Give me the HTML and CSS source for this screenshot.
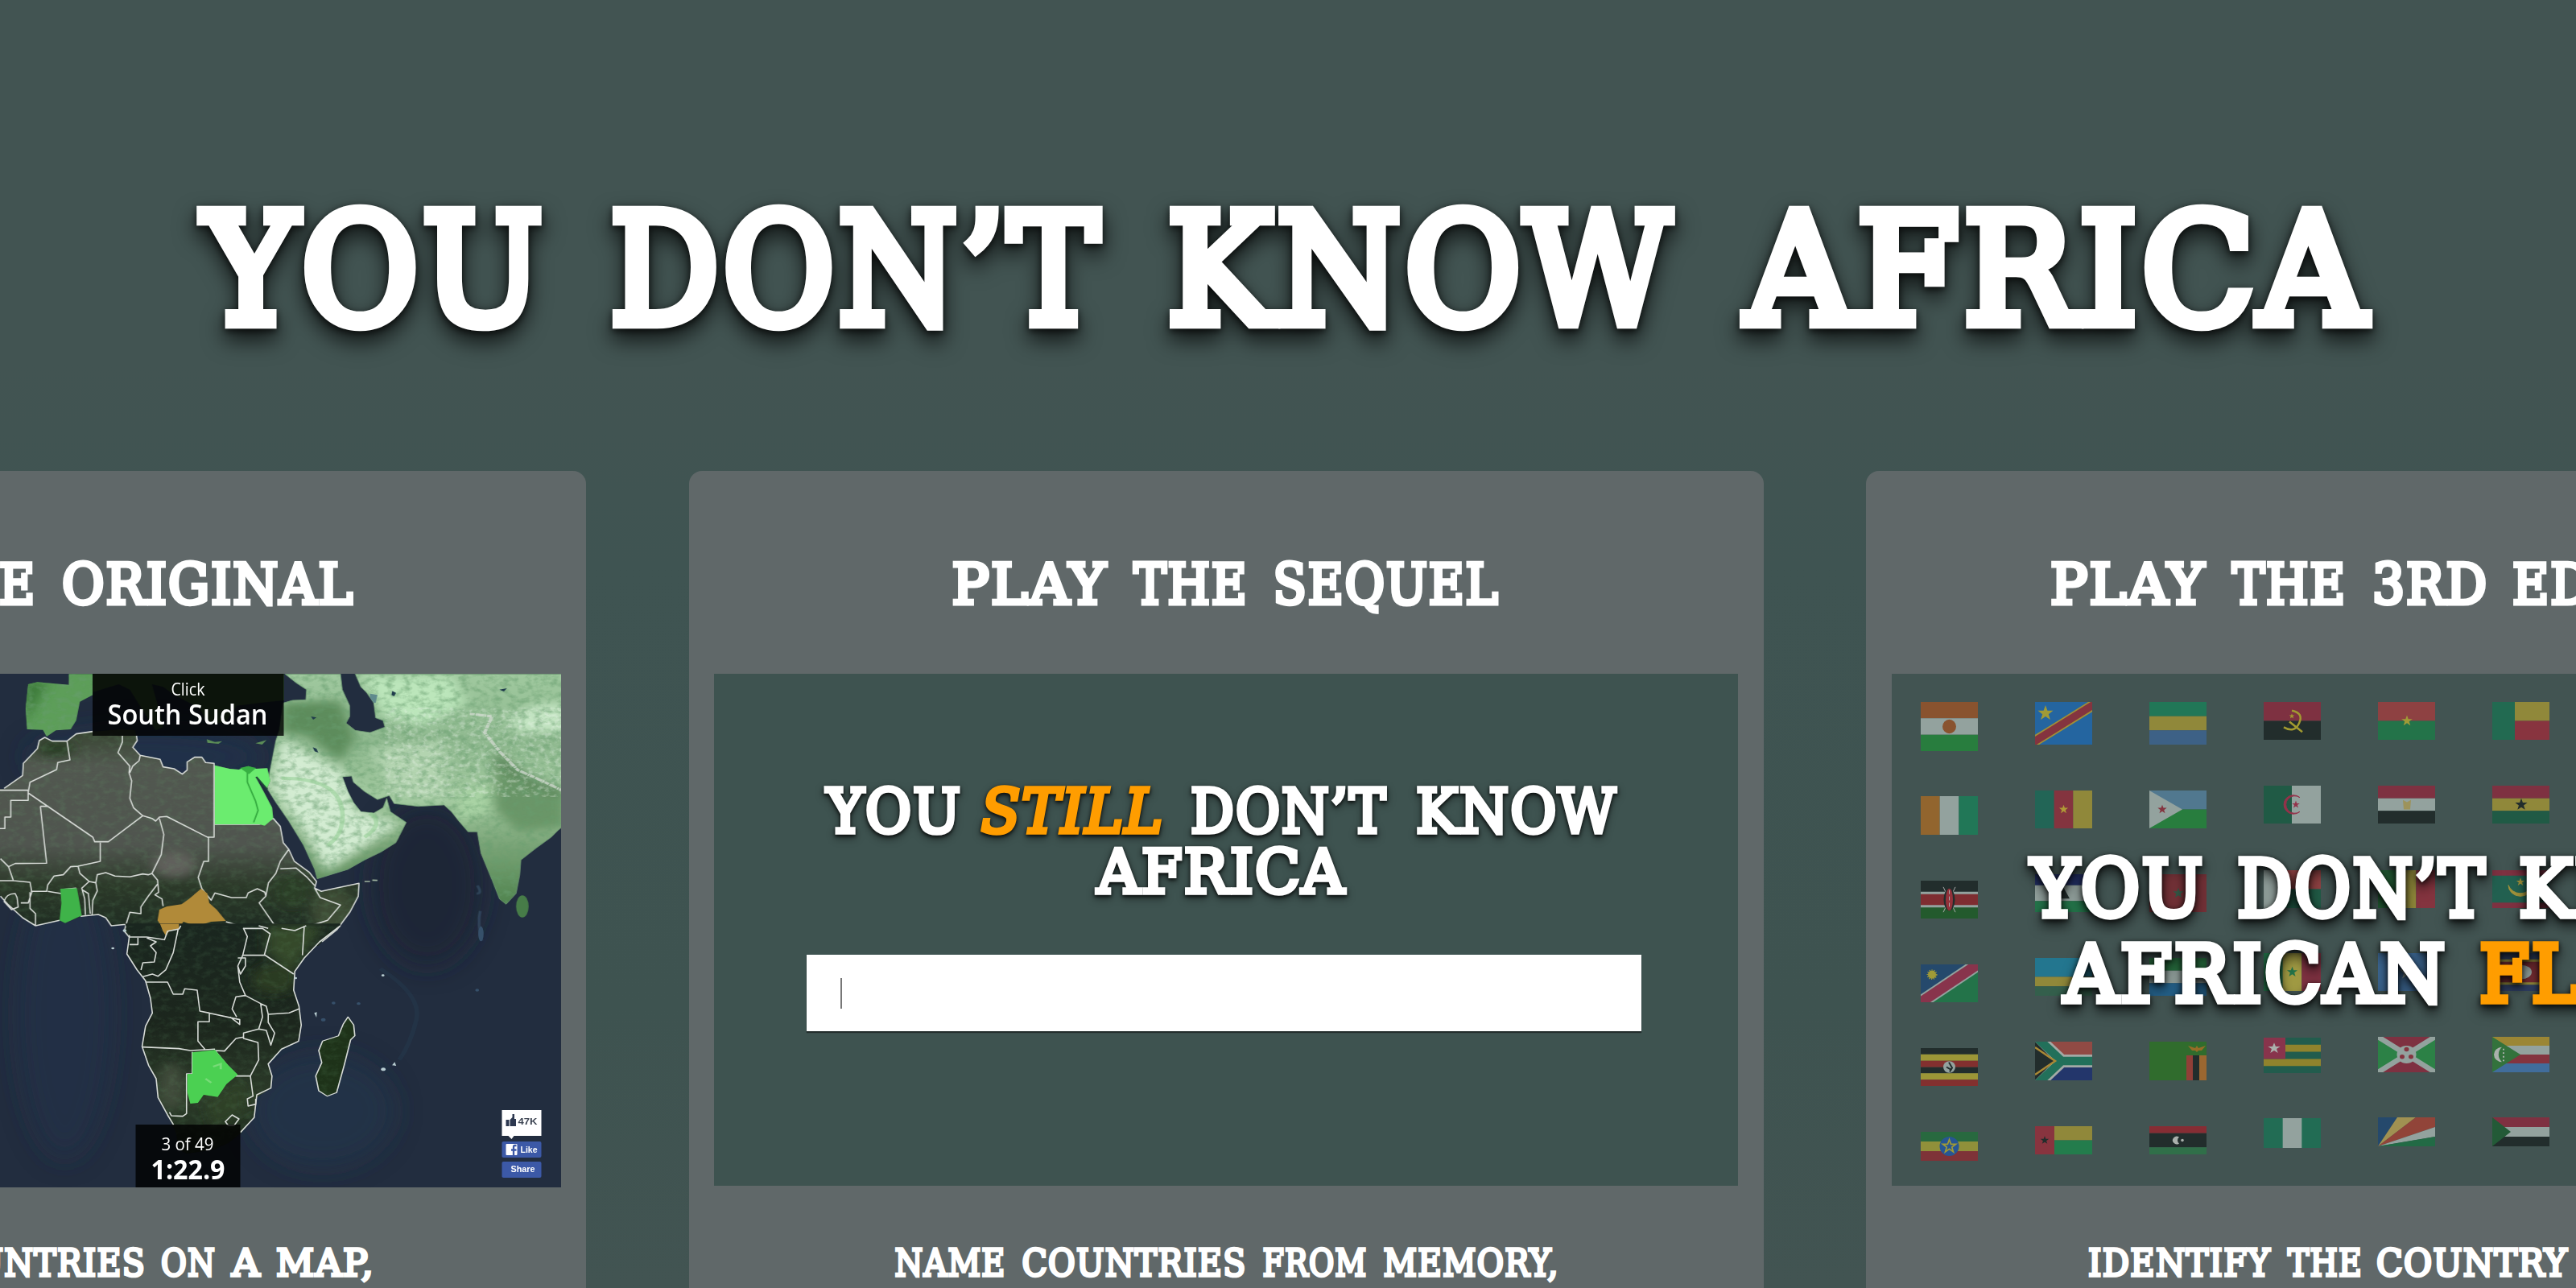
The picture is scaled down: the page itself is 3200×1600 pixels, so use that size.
FILE: index.html
```html
<!DOCTYPE html>
<html lang="en">
<head>
<meta charset="utf-8">
<title>You Don’t Know Africa</title>
<link rel="stylesheet" href="styles.css">
</head>
<body>
<header class="masthead">
  <h1 class="title">
    <svg class="lettering lettering-title" viewBox="0 200 3200 260">
      <text x="253" y="401" textLength="426" lengthAdjust="spacingAndGlyphs">YOU</text>
      <text x="758" y="401" textLength="612" lengthAdjust="spacingAndGlyphs">DON’T</text>
      <text x="1450" y="401" textLength="630" lengthAdjust="spacingAndGlyphs">KNOW</text>
      <text x="2169" y="401" textLength="775" lengthAdjust="spacingAndGlyphs">AFRICA</text>
    </svg>
  </h1>
</header>
<main class="games">
  <article class="card">
    <h2 class="card-title">
      <svg class="lettering lettering-heading" viewBox="-607 585 1335 252">
        <text x="-323" y="749.5" textLength="193" lengthAdjust="spacingAndGlyphs">PLAY</text>
        <text x="-98" y="749.5" textLength="143" lengthAdjust="spacingAndGlyphs">THE</text>
        <text x="77" y="749.5" textLength="363" lengthAdjust="spacingAndGlyphs">ORIGINAL</text>
      </svg>
    </h2>
    <div class="screen screen-map">
      <svg class="art" viewBox="-575.500 837 1272 638">
        <defs>
          <linearGradient id="sahara" x1="0" y1="250" x2="0" y2="1050" gradientUnits="userSpaceOnUse">
            <stop offset="0" stop-color="#35432f"/><stop offset=".18" stop-color="#525850"/><stop offset=".55" stop-color="#50554f"/><stop offset=".74" stop-color="#2c3929"/><stop offset="1" stop-color="#1b2820"/>
          </linearGradient>
          <linearGradient id="south" x1="0" y1="0" x2="0" y2="850" gradientUnits="userSpaceOnUse">
            <stop offset="0" stop-color="#1a261f"/><stop offset=".45" stop-color="#1c261d"/><stop offset=".75" stop-color="#2c3b29"/><stop offset="1" stop-color="#1c2a1c"/>
          </linearGradient>
          <linearGradient id="asia" x1="0" y1="50" x2="0" y2="900" gradientUnits="userSpaceOnUse">
            <stop offset="0" stop-color="#a0c99f"/><stop offset=".3" stop-color="#8fb98f"/><stop offset=".55" stop-color="#a3caa0"/><stop offset=".75" stop-color="#7ba578"/><stop offset="1" stop-color="#528550"/>
          </linearGradient>
          <filter id="soft" x="-30%" y="-30%" width="160%" height="160%"><feGaussianBlur stdDeviation="16"/></filter>
          <filter id="relief" x="0" y="0" width="100%" height="100%">
            <feTurbulence type="fractalNoise" baseFrequency=".045 .05" numOctaves="5" seed="8"/>
            <feColorMatrix values="0 0 0 0 .14  0 0 0 0 .34  0 0 0 0 .16  2.6 0 0 0 -1.1"/>
          </filter>
          <filter id="snow" x="0" y="0" width="100%" height="100%">
            <feTurbulence type="fractalNoise" baseFrequency=".07 .07" numOctaves="4" seed="3"/>
            <feColorMatrix values="0 0 0 0 .9  0 0 0 0 .96  0 0 0 0 .9  3 0 0 0 -1.4"/>
          </filter>
          <path id="eurasia" d="M765 160L790 150 826 148 828 110 800 85 770 52H920L925 110 945 170V210L935 235 960 262 1000 270 1040 250 1035 225 1015 215 1010 160 990 120 975 100 960 52H1530V610L1508 635 1490 660 1450 700 1408 745 1405 800 1395 870 1368 910 1350 890 1330 820 1300 720 1290 640 1265 640 1240 600 1220 565 1200 540 1130 545 1065 535 1052 505 1020 520 985 490 955 455 950 432 925 435 940 490 955 530 975 565 1010 570 1035 550 1045 515 1055 565 1098 605 1070 680 1030 715 985 745 940 780 857 815 850 780 820 690 780 600 745 530 722 480 728 420 735 370 745 300 755 260Z"/>
          <path id="iberia" d="M75 90L100 82 185 92V52H250V130L215 155 205 225 190 258 150 262 125 285 115 260 72 258 68 180Z"/>
          <path id="north" d="M-30 480H10L60 430 62 385 100 330 105 300 120 288 140 302H180L205 275 250 266 330 258 365 262 370 300 358 325 378 355 432 370 440 398 470 405 492 425 505 410V380L525 362H545L555 382 578 385 580 392 620 405 645 408 670 395 690 405 722 403 730 450 720 480 700 450 690 435 712 490 735 550 738 590 757 620 765 680 780 705 795 750 835 790 855 825 850 850 868 862 900 852 970 832 968 880 945 940 910 1005 870 1050 860 1065H350V1035L335 1010 340 985 300 990 285 960 265 948 225 950 175 980 160 970 95 990 60 960 20 910 0 880-30 850Z"/>
          <path id="cone" d="M328-8L340 35 333 105 360 165 382 205 395 270 400 325 382 375 373 450 390 520 410 570 415 640 440 705 462 770 470 835 490 850 560 835 600 810 635 770 668 715 675 640 712 605 715 560 705 515 740 460 785 430 792 370 786 300 772 240 775 170 800 120 840 60 895 0V-8Z"/>
          <path id="madagascar" d="M915 340L903 365 897 385 890 410 848 430 838 465 846 510 830 560 838 615 860 635 885 622 905 520 922 425 933 410 930 370Z"/>
          <clipPath id="asiaClip"><use href="#eurasia"/><use href="#iberia"/></clipPath>
          <clipPath id="northClip"><use href="#north"/></clipPath>
          <clipPath id="coneClip"><use href="#cone"/><use href="#madagascar"/></clipPath>
        </defs>
        <rect x="-576" y="837" width="1273" height="638" fill="#222d3f"/>
        <g filter="url(#soft)"><ellipse cx="180" cy="940" rx="150" ry="35" fill="#22334f" opacity=".6"/><ellipse cx="80" cy="1260" rx="60" ry="180" fill="#20334b" opacity=".5"/><ellipse cx="400" cy="1380" rx="90" ry="70" fill="#23374d" opacity=".5"/><ellipse cx="530" cy="1100" rx="70" ry="100" fill="#1d2435" opacity=".7"/></g>
        <g transform="translate(0 820) scale(.4592 .3333)">
          <path d="M250 52H767V150L700 160 640 170 610 230 560 240 540 180 470 130 440 100 410 90 430 190 440 250 420 262 400 220 350 110 320 90 250 120Z" fill="#3c6338"/>
          <use href="#eurasia" fill="url(#asia)" stroke="#6f9a74" stroke-width="2"/>
          <use href="#iberia" fill="#5d9e59"/>
          <g clip-path="url(#asiaClip)">
            <g filter="url(#soft)">
              <path d="M760 290L930 420 960 560 1080 610 880 790 820 640 735 470Z" fill="#d3ecd2"/>
              <path d="M980 60L1220 60 1260 160 1150 240 1040 210Z" fill="#bce6bb"/>
              <path d="M1370 220L1450 165 1530 160V270H1400Z" fill="#c4e5c3"/>
              <path d="M1240 490L1330 460 1350 550 1240 600Z" fill="#a9d3a4"/>
              <path d="M1000 330L1200 300 1200 520 1060 500Z" fill="#b3d4b0"/>
              <path d="M760 160L920 150 960 290 920 380 830 280 760 270Z" fill="#5d8c5b"/>
              <path d="M1340 320L1420 440 1530 510V620L1400 640 1330 550Z" fill="#6b9667"/>
              <path d="M1340 370L1440 450 1530 500" fill="none" stroke="#4a734b" stroke-width="18"/>
              <path d="M60 80L130 80 90 180 70 240Z" fill="#3c7a3b"/>
            </g>
            <rect y="40" width="1530" height="900" filter="url(#relief)" opacity=".55"/>
            <rect x="1040" y="180" width="490" height="330" filter="url(#snow)" opacity=".35"/>
            <path d="M760 440Q850 440 890 480T925 600Q920 660 885 690M985 660Q1040 610 1000 570" fill="none" stroke="#8ecb8e" stroke-width="12" opacity=".5"/>
            <path d="M1270 200L1330 210 1310 270 1350 340 1400 410 1450 440 1518 485" fill="none" stroke="#d7ddd5" stroke-width="9" stroke-dasharray="13 3 22 2 5 2" opacity=".7"/>
            <path d="M1000 200L1015 215 1030 245 1000 262Z" fill="#74b9b7"/>
            <path d="M1000 125L1020 130 1015 160 1000 155Z" fill="#5f8a8d"/>
            <path d="M1060 115L1070 122 1065 135 1058 130ZM1350 110L1370 105 1362 117ZM845 325L855 330 860 345 850 340ZM840 210L855 214 846 222Z" fill="#1f3b4c"/>
          </g>
          <path d="M558 295L580 305 600 302 590 312 560 308ZM690 310L720 298 708 315Z" fill="#5c8d57"/>
          <ellipse cx="1412" cy="918" rx="17" ry="41" fill="#477c48"/>
          <path d="M1290 840Q1305 870 1288 870M1298 935Q1290 980 1302 1045" fill="none" stroke="#42617c" stroke-width="8" opacity=".45"/>
          <path d="M985 825H1000M1006 820L1020 821" stroke="#9fb39f" stroke-width="5"/>
          <use href="#north" fill="url(#sahara)"/>
          <g clip-path="url(#northClip)">
            <g filter="url(#soft)"><ellipse cx="150" cy="330" rx="50" ry="30" fill="#2a3d26"/><ellipse cx="900" cy="940" rx="60" ry="90" fill="#3c4c34"/><ellipse cx="790" cy="860" rx="50" ry="60" fill="#2c3d26"/><ellipse cx="470" cy="760" rx="60" ry="50" fill="#60615c"/></g>
            <rect y="240" width="1000" height="820" filter="url(#relief)" opacity=".18"/>
          </g>
          <g stroke="#d6dad6" stroke-width="1.6" stroke-linejoin="round" fill="none">
            <path vector-effect="non-scaling-stroke" d="M-30 485H75V523H28V585H12V628H-5M10 478L60 430 62 385 100 330 105 300 120 288 140 302H180L205 275 250 266M180 302L188 372 155 382 152 408 80 455 75 495 250 660 255 677H292L385 580 360 550 350 515 355 450 348 420 350 395 318 345 330 305V282M368 282L370 300 358 325 378 355 375 375 358 395 350 420M378 355L432 370 440 398 470 405 492 425 505 410V380L525 362H545L555 382 578 385V660H563V750H550L535 810 545 852M385 580L410 590 420 600 430 585 450 583 563 662M430 590L442 650 435 725 410 795 400 800 385 797 350 808 310 805 285 792 262 800 258 830 262 860 250 895 248 948M108 545H130M108 545L125 757 40 758 22 770 0 740M22 770L35 822 80 828 85 865 75 905 55 905M270 680V750L210 768 190 770 170 800 145 805 128 838 125 862H82M210 768L215 795 240 825 220 850 228 890 230 950M240 825L258 830M205 850L165 855M243 945L238 870 220 855M128 862L165 870M410 795L425 820 428 865 418 875 437 890 440 917M425 835L400 880 380 920 380 945 350 940 340 985M545 852L570 895 580 868 625 885 665 885 670 868 695 852 715 865 718 880M718 880L725 830 745 795 757 750 780 705M757 778L800 775 830 810 850 840M718 880L700 905 715 935 740 985M850 850L865 885 920 913 885 970 835 992 780 1002 765 988 740 985 700 1000 670 1000 610 975M835 992L820 1015V1060M670 1000L665 1060M715 995L725 1060M580 612H700L738 590 757 620 765 680 780 705 795 750 835 790 855 825 850 850 868 862 900 852 970 832 968 880 945 940 910 1005 870 1050M95 990L60 960 20 910 0 880M95 990V945L80 925V865M40 870Q15 870 10 900L30 930 48 920 45 885ZM95 990L160 970M217 955L265 948 285 960 300 990 340 985 335 1010 350 1035V1060M350 1035H448M-10 822L35 822"/>
          </g>
          <path d="M580 392L620 405 645 408 670 395 690 405 722 403 730 450 720 480 700 450 690 435 712 490 735 550 738 590 715 617 700 612H580Z" fill="#6bec6f"/>
          <path d="M668 410V455L690 525 697 560 685 605" stroke="#33a93e" stroke-width="4" fill="none"/>
          <path d="M648 402L672 425 692 402 670 395Z" fill="#38b043"/>
          <path d="M692 435L722 482" stroke="#1d4436" stroke-width="5"/>
          <path d="M162 852L207 850 215 910 220 952 175 980 160 970 165 905Z" fill="#3fb349"/>
          <path d="M543 852L560 870 565 905 585 930 610 972 570 975 530 992 495 975 480 1005 455 1010 448 1020 425 970 430 930 450 918 490 910 510 890Z" fill="#b18a39"/>
        </g>
        <g transform="translate(0 1150) scale(.4719 .3333)">
          <use href="#cone" fill="url(#south)"/><use href="#madagascar" fill="#1e3219"/>
          <g clip-path="url(#coneClip)">
            <g filter="url(#soft)"><path d="M700 0H850L770 170 700 100Z" fill="#35482b"/><ellipse cx="450" cy="600" rx="35" ry="90" fill="#404b3b"/><path d="M540 660L640 570 650 680 560 760Z" fill="#2f4128"/><ellipse cx="720" cy="200" rx="60" ry="55" fill="#293a20"/></g>
            <rect x="320" width="620" height="850" filter="url(#relief)" opacity=".14"/>
            <path d="M420-8H470V12L445 18 436 38 428 20Z" fill="#b18a39"/>
          </g>
          <g stroke="#d6dad6" stroke-width="1.6" stroke-linejoin="round" fill="none">
            <path vector-effect="non-scaling-stroke" d="M340 35L333 105 360 165 382 205 395 270 400 325 382 375 373 450 390 520 410 570 415 640 440 705 456 742M632 770L668 715 675 630 712 605 715 560 705 515 740 460 785 430 792 370 786 300 772 240 775 170 800 120 840 60 895 0"/>
            <path vector-effect="non-scaling-stroke" d="M340 42H385L432 52 440 20 470 12 475 0M340 70H362V45M385 45L410 60 395 75 410 100 405 135 375 138 370 165M468 12L455 100 435 165 415 188 400 180 375 190M382 210H440L455 255H480L485 235 518 240 525 318 550 325V358H520V430L538 460M525 318L630 350V368L605 340M622 340L610 310 620 265 645 260 685 290 700 300 705 330 760 325 786 310M645 260L630 210 625 150 638 110 650 40 640 10 690 10 710 30 695 108 740 150 772 180M638 110H695M625 120H645V150L632 180 625 150M800 0L795 110M680 0L705 10M740 10L775 18 805 0M685 290L690 340 680 385 640 400V420L678 435 680 500 658 560H620L565 465 590 467 620 420 640 415M680 385L700 390 712 445 722 400 705 360 705 330M373 452L470 458 500 465 565 460M505 470V552H490V700L480 710 450 708 445 695M658 560L665 635 650 645 652 672 672 665V645M592 730L610 705 628 720 615 745 600 745Z"/>
            <use href="#madagascar" stroke-width="3.5"/>
          </g>
          <path d="M505 472L565 463 600 520 625 555 595 590 572 638 535 630 520 660 500 663 492 620V552H505Z" fill="#4bd052"/>
          <path d="M560 525L580 515V535M540 570L555 585" stroke="#8be089" stroke-width="6" fill="none" opacity=".7"/>
          <g fill="#b8cdd1"><circle cx="296" cy="84" r="4"/><circle cx="327" cy="18" r="5"/><circle cx="1007" cy="185" r="4"/><circle cx="1008" cy="535" r="6"/><path d="M1031 520L1038 508 1042 522ZM826 325L833 322 832 342Z"/><circle cx="777" cy="195" r="4"/></g>
          <g fill="#36506a"><ellipse cx="1265" cy="30" rx="7" ry="28"/><circle cx="1255" cy="240" r="5"/><circle cx="877" cy="288" r="5"/><circle cx="943" cy="290" r="5"/><circle cx="850" cy="350" r="6"/></g>
          <path d="M1000 160Q1110 260 1095 350T1050 500" fill="none" stroke="#2b4761" stroke-width="12" opacity=".22"/>
        </g>
        <g fill="#000" fill-opacity=".8"><rect x="114" y="837" width="238" height="77"/><rect x="168" y="1397" width="130" height="78"/></g>
        <g class="map-text">
          <text x="212" y="864" font-size="22" textLength="42" lengthAdjust="spacingAndGlyphs">Click</text>
          <text x="133" y="900" font-size="34" font-weight="600" textLength="199" lengthAdjust="spacingAndGlyphs">South Sudan</text>
          <text x="200" y="1429" font-size="22" textLength="65" lengthAdjust="spacingAndGlyphs">3 of 49</text>
          <text x="187" y="1465" font-size="34" font-weight="700" textLength="92" lengthAdjust="spacingAndGlyphs">1:22.9</text>
        </g>
        <path d="M623 1379H672V1411H638L635 1415 631 1411H623Z" fill="#fff"/>
        <path d="M628 1391H632V1399H628ZM633 1391L636 1388V1384H638.500V1390H640.500V1399H633Z" fill="#2d3850"/>
        <rect x="623" y="1418" width="49" height="20" rx="2" fill="#3c59a7"/><rect x="623" y="1443" width="49" height="20" rx="2" fill="#3c59a7"/>
        <rect x="628" y="1421" width="14" height="14" rx="1" fill="#fff"/><path d="M641 1423H639Q637.500 1423 637.500 1425V1435M634.500 1428.500H641" stroke="#3c59a7" stroke-width="2.300" fill="none"/>
        <g class="social-text">
          <text class="count" x="643" y="1397" textLength="24" lengthAdjust="spacingAndGlyphs">47K</text>
          <text x="646" y="1432" textLength="21" lengthAdjust="spacingAndGlyphs">Like</text>
          <text x="634" y="1456" textLength="30" lengthAdjust="spacingAndGlyphs">Share</text>
        </g>
      </svg>
    </div>
    <p class="card-caption">
      <svg class="lettering lettering-caption" viewBox="-607 1475 1335 125">
        <text x="-345" y="1585" textLength="227" lengthAdjust="spacingAndGlyphs">IDENTIFY</text>
        <text x="-98" y="1585" textLength="279" lengthAdjust="spacingAndGlyphs">COUNTRIES</text>
        <text x="200" y="1585" textLength="68" lengthAdjust="spacingAndGlyphs">ON</text>
        <text x="288" y="1585" textLength="36" lengthAdjust="spacingAndGlyphs">A</text>
        <text x="343" y="1585" textLength="122" lengthAdjust="spacingAndGlyphs">MAP,</text>
      </svg>
    </p>
  </article>

  <article class="card">
    <h2 class="card-title">
      <svg class="lettering lettering-heading" viewBox="855.500 585 1335 252">
        <text x="1182" y="749.5" textLength="193" lengthAdjust="spacingAndGlyphs">PLAY</text>
        <text x="1408" y="749.5" textLength="142" lengthAdjust="spacingAndGlyphs">THE</text>
        <text x="1581" y="749.5" textLength="281" lengthAdjust="spacingAndGlyphs">SEQUEL</text>
      </svg>
    </h2>
    <div class="screen screen-quiz">
      <h3 class="quiz-title">
        <svg class="lettering lettering-quiz" viewBox="888 950 1272 200">
          <text x="1028" y="1033.5" textLength="168" lengthAdjust="spacingAndGlyphs">YOU</text>
          <text class="accent slanted" x="1220" y="1033.5" textLength="227" lengthAdjust="spacingAndGlyphs">STILL</text>
          <text x="1480" y="1033.5" textLength="244" lengthAdjust="spacingAndGlyphs">DON’T</text>
          <text x="1760" y="1033.5" textLength="250" lengthAdjust="spacingAndGlyphs">KNOW</text>
          <text x="1364" y="1108.500" textLength="309" lengthAdjust="spacingAndGlyphs">AFRICA</text>
        </svg>
      </h3>
      <div class="answer"><span class="caret"></span></div>
    </div>
    <p class="card-caption">
      <svg class="lettering lettering-caption" viewBox="855.500 1473 1335 127">
        <text x="1111" y="1585" textLength="138" lengthAdjust="spacingAndGlyphs">NAME</text>
        <text x="1269" y="1585" textLength="279" lengthAdjust="spacingAndGlyphs">COUNTRIES</text>
        <text x="1568" y="1585" textLength="130" lengthAdjust="spacingAndGlyphs">FROM</text>
        <text x="1718" y="1585" textLength="218" lengthAdjust="spacingAndGlyphs">MEMORY,</text>
      </svg>
    </p>
  </article>

  <article class="card">
    <h2 class="card-title">
      <svg class="lettering lettering-heading" viewBox="2318 585 1335 252">
        <text x="2547" y="749.5" textLength="193" lengthAdjust="spacingAndGlyphs">PLAY</text>
        <text x="2773" y="749.5" textLength="142" lengthAdjust="spacingAndGlyphs">THE</text>
        <text x="2947" y="749.5" textLength="144" lengthAdjust="spacingAndGlyphs">3RD</text>
        <text x="3121" y="749.5" textLength="304" lengthAdjust="spacingAndGlyphs">EDITION</text>
      </svg>
    </h2>
    <div class="screen screen-flags">
      <svg class="art" viewBox="2350 837 1272 636">
        <defs>
          <path id="star" d="M0-10L2.400-3.200H9.500L3.800 1.200 5.900 8.100 0 4 -5.900 8.100 -3.800 1.200 -9.500-3.200H-2.400Z"/>
        </defs>
        <!-- Each flag is a 71-unit wide nested viewport stretched to its row height -->
        <g>
          <svg x="2386" y="872" width="71" height="61" viewBox="0 0 71 60" preserveAspectRatio="none"><path fill="#89532f" d="M0 0h71v20H0z"/><path fill="#93a29e" d="M0 20h71v20H0z"/><path fill="#287d3e" d="M0 40h71v20H0z"/><circle cx="35.500" cy="30" r="8.500" fill="#89532f"/></svg>
          <svg x="2528" y="872" width="71" height="53" viewBox="0 0 71 53" preserveAspectRatio="none"><path fill="#2465a0" d="M0 0h71v53H0z"/><path stroke="#a08f37" stroke-width="13" d="M-4 51L75 2"/><path stroke="#84343f" stroke-width="9.500" d="M-4 51L75 2"/><use href="#star" x="13" y="14" fill="#a09a37"/></svg>
          <svg x="2670" y="872" width="71" height="53" viewBox="0 0 71 60" preserveAspectRatio="none"><path fill="#217757" d="M0 0h71v20H0z"/><path fill="#90883a" d="M0 20h71v20H0z"/><path fill="#3d6186" d="M0 40h71v20H0z"/></svg>
          <svg x="2812" y="872" width="71" height="47" viewBox="0 0 71 48" preserveAspectRatio="none"><path fill="#7e3141" d="M0 0h71v24H0z"/><path fill="#222d2c" d="M0 24h71v24H0z"/><path d="M35 11Q50 14 44 27T25 32M32 25L48 38" fill="none" stroke="#a29a30" stroke-width="2.500"/><use href="#star" transform="translate(35 18) scale(.35)" fill="#a29a30"/></svg>
          <svg x="2954" y="872" width="71" height="47" viewBox="0 0 71 48" preserveAspectRatio="none"><path fill="#8e4142" d="M0 0h71v24H0z"/><path fill="#237349" d="M0 24h71v24H0z"/><use href="#star" transform="translate(36 24) scale(.72)" fill="#a09a37"/></svg>
          <svg x="3096" y="872" width="71" height="47" viewBox="0 0 71 48" preserveAspectRatio="none"><path fill="#226a51" d="M0 0h28v48H0z"/><path fill="#90883a" d="M28 0h43v24H28z"/><path fill="#88343f" d="M28 24h43v24H28z"/></svg>

          <svg x="2386" y="989" width="71" height="48" viewBox="0 0 72 48" preserveAspectRatio="none"><path fill="#92652e" d="M0 0h24v48H0z"/><path fill="#93a29e" d="M24 0h24v48H24z"/><path fill="#217757" d="M48 0h24v48H48z"/></svg>
          <svg x="2528" y="982" width="71" height="47" viewBox="0 0 72 48" preserveAspectRatio="none"><path fill="#226556" d="M0 0h24v48H0z"/><path fill="#84343f" d="M24 0h24v48H24z"/><path fill="#90883a" d="M48 0h24v48H48z"/><use href="#star" transform="translate(36 24) scale(.6)" fill="#b09a37"/></svg>
          <svg x="2670" y="982" width="71" height="47" viewBox="0 0 71 48" preserveAspectRatio="none"><path fill="#51788f" d="M0 0h71v24H0z"/><path fill="#287d3e" d="M0 24h71v24H0z"/><path fill="#93a29e" d="M0 0L41 24 0 48z"/><use href="#star" transform="translate(16 24) scale(.6)" fill="#84343f"/></svg>
          <svg x="2812" y="976" width="71" height="47" viewBox="0 0 71 48" preserveAspectRatio="none"><path fill="#205a45" d="M0 0h35v48H0z"/><path fill="#93a29e" d="M35 0h36v48H35z"/><path d="M45 15A11 11 0 1 0 45 33A12 12 0 1 1 45 15Z" fill="#93324a" stroke="#93324a"/><use href="#star" transform="translate(40 24) scale(.5)" fill="#93324a"/></svg>
          <svg x="2954" y="976" width="71" height="47" viewBox="0 0 71 48" preserveAspectRatio="none"><path fill="#7e3141" d="M0 0h71v16H0z"/><path fill="#93a29e" d="M0 16h71v16H0z"/><path fill="#222d2c" d="M0 32h71v16H0z"/><path d="M31 18L36 21 41 18 40 30H32Z" fill="#9d935b"/></svg>
          <svg x="3096" y="976" width="71" height="47" viewBox="0 0 71 48" preserveAspectRatio="none"><path fill="#7e3141" d="M0 0h71v16H0z"/><path fill="#90883a" d="M0 16h71v16H0z"/><path fill="#205a45" d="M0 32h71v16H0z"/><use href="#star" transform="translate(36 24) scale(.8)" fill="#222d2c"/></svg>

          <svg x="2386" y="1094" width="71" height="47" viewBox="0 0 71 48" preserveAspectRatio="none"><path fill="#93a29e" d="M0 0h71v48H0z"/><path fill="#222d2c" d="M0 0h71v14H0z"/><path fill="#7e2d31" d="M0 17h71v14H0z"/><path fill="#235a2d" d="M0 34h71v14H0z"/><path d="M28 8L43 40M43 8L28 40" stroke="#aaa"/><ellipse cx="35.500" cy="24" rx="7" ry="14" fill="#222d2c"/><ellipse cx="35.500" cy="24" rx="4.500" ry="14" fill="#93313a"/><path d="M35.500 12V36" stroke="#aaa" stroke-dasharray="5 3"/></svg>
          <svg x="2528" y="1086" width="71" height="47" viewBox="0 0 71 48" preserveAspectRatio="none"><path fill="#222f65" d="M0 0h71v14H0z"/><path fill="#93a29e" d="M0 14h71v20H0z"/><path fill="#237349" d="M0 34h71v14H0z"/><path fill="#222d2c" d="M35 16L43 31H28z"/></svg>
          <svg x="2670" y="1086" width="71" height="47" viewBox="0 0 71 48" preserveAspectRatio="none"><path fill="#733137" d="M0 0h71v48H0z"/><use href="#star" transform="translate(36 24) scale(.7)" fill="#345746"/></svg>
          <svg x="2812" y="1081" width="71" height="47" viewBox="0 0 71 48" preserveAspectRatio="none"><path fill="#93a29e" d="M0 0h24v48H0z"/><path fill="#8e4142" d="M24 0h47v24H24z"/><path fill="#205a45" d="M24 24h47v24H24z"/></svg>
          <svg x="2954" y="1081" width="71" height="47" viewBox="0 0 72 48" preserveAspectRatio="none"><path fill="#235f35" d="M0 0h24v48H0z"/><path fill="#90883a" d="M24 0h24v48H24z"/><path fill="#84343f" d="M48 0h24v48H48z"/></svg>
          <svg x="3096" y="1081" width="71" height="47" viewBox="0 0 71 48" preserveAspectRatio="none"><path fill="#7e3141" d="M0 0h71v48H0z"/><path fill="#226050" d="M0 7h71v34H0z"/><path d="M20 19A16 16 0 0 0 50 19A15 14 0 0 1 20 19Z" fill="#a0913b" stroke="#a0913b"/><use href="#star" transform="translate(35 15) scale(.55)" fill="#a0913b"/></svg>

          <svg x="2386" y="1198" width="71" height="47" viewBox="0 0 71 48" preserveAspectRatio="none"><path fill="#25496c" d="M0 0h71L0 48z"/><path fill="#237349" d="M71 0v48H0z"/><path stroke="#93a29e" stroke-width="17" d="M-4 51L75-3"/><path stroke="#88344c" stroke-width="13" d="M-4 51L75-3"/><circle cx="14" cy="13" r="5" fill="#a09a37" stroke="#a09a37" stroke-width="3" stroke-dasharray="1 1.500"/></svg>
          <svg x="2528" y="1190" width="71" height="47" viewBox="0 0 71 48" preserveAspectRatio="none"><path fill="#23768f" d="M0 0h71v24H0z"/><path fill="#90883a" d="M0 24h71v12H0z"/><path fill="#345f4c" d="M0 36h71v12H0z"/></svg>
          <svg x="2670" y="1190" width="71" height="47" viewBox="0 0 71 48" preserveAspectRatio="none"><path fill="#287040" d="M0 0h71v16H0z"/><path fill="#93a29e" d="M0 16h71v16H0z"/><path fill="#24618a" d="M0 32h71v16H0z"/></svg>
          <svg x="2812" y="1184" width="71" height="47" viewBox="0 0 72 48" preserveAspectRatio="none"><path fill="#237349" d="M0 0h24v48H0z"/><path fill="#a09a43" d="M24 0h24v48H24z"/><path fill="#7e3141" d="M48 0h24v48H48z"/><use href="#star" transform="translate(36 24) scale(.7)" fill="#237349"/></svg>
          <svg x="2954" y="1184" width="71" height="47" viewBox="0 0 71 48" preserveAspectRatio="none"><path fill="#3c6691" d="M0 0h71v48H0z"/><use href="#star" x="36" y="24" fill="#93a29e"/></svg>
          <svg x="3096" y="1184" width="71" height="47" viewBox="0 0 71 48" preserveAspectRatio="none"><path fill="#2e3e61" d="M0 0h71v48H0z"/><path fill="#90883a" d="M0 8h71v32H0z"/><path fill="#742b31" d="M0 11h71v26H0z"/><ellipse cx="36" cy="24" rx="13" ry="9" fill="#93a29e"/><path fill="#222d2c" d="M24 24L36 15V33z"/></svg>

          <svg x="2386" y="1302" width="71" height="47" viewBox="0 0 71 48" preserveAspectRatio="none"><path fill="#222d2c" d="M0 0h71v8H0zM0 24h71v8H0z"/><path fill="#9c9637" d="M0 8h71v8H0zM0 32h71v8H0z"/><path fill="#83302f" d="M0 16h71v8H0zM0 40h71v8H0z"/><circle cx="35.500" cy="24" r="7.500" fill="#93a29e"/><path d="M35 18L39 25 36 30M32 24L37 27" stroke="#222d2c" stroke-width="2" fill="none"/></svg>
          <svg x="2528" y="1294" width="71" height="48" viewBox="0 0 71 48" preserveAspectRatio="none"><path fill="#914a44" d="M0 0h71v24H0z"/><path fill="#23366b" d="M0 24h71v24H0z"/><path d="M-4-11L33 24-4 59M33 24H71" fill="none" stroke="#a3aaa6" stroke-width="16"/><path fill="#222d2c" d="M0 0L24 24 0 48z"/><path d="M-4-11L33 24-4 59M33 24H71" fill="none" stroke="#22705a" stroke-width="10.500"/><path d="M0 7L25 24 0 41" fill="#222d2c" stroke="#a98836" stroke-width="2.500"/></svg>
          <svg x="2670" y="1294" width="71" height="48" viewBox="0 0 71 48" preserveAspectRatio="none"><path fill="#306c2d" d="M0 0h71v48H0z"/><path fill="#913f37" d="M46 17h8v31h-8z"/><path fill="#222d2c" d="M54 17h8v31h-8z"/><path fill="#9b6730" d="M62 17h9v31h-9z"/><path d="M48 5L57 8 59 5 61 8 70 5 65 11H61L59 13 57 11H53Z" fill="#966c27"/></svg>
          <svg x="2812" y="1289" width="71" height="44" viewBox="0 0 71 50" preserveAspectRatio="none"><path fill="#225c4d" d="M0 0h71v50H0z"/><path fill="#90832d" d="M0 10h71v10H0zM0 30h71v10H0z"/><path fill="#88344c" d="M0 0h27v30H0z"/><use href="#star" transform="translate(13 15) scale(.8)" fill="#aab0ac"/></svg>
          <svg x="2954" y="1288" width="71" height="44" viewBox="0 0 71 48" preserveAspectRatio="none"><path fill="#7e3141" d="M0 0h71v48H0z"/><path fill="#2c8146" d="M0 0L35 24 0 48zM71 0L35 24 71 48z"/><path stroke="#93a29e" stroke-width="7" d="M0 0L71 48M71 0L0 48"/><circle cx="35.500" cy="24" r="12" fill="#93a29e"/><g fill="#84343f"><circle cx="35.500" cy="17" r="3"/><circle cx="30" cy="27" r="3"/><circle cx="41" cy="27" r="3"/></g></svg>
          <svg x="3096" y="1288" width="71" height="44" viewBox="0 0 71 48" preserveAspectRatio="none"><path fill="#9b8635" d="M0 0h71v12H0z"/><path fill="#93a29e" d="M0 12h71v12H0z"/><path fill="#84343f" d="M0 24h71v12H0z"/><path fill="#416d9c" d="M0 36h71v12H0z"/><path fill="#33723c" d="M0 0L35 24 0 48z"/><path d="M12 14A10 10 0 1 0 12 34A14 14 0 0 1 12 14Z" fill="#aab0ac"/><path d="M14 16V33" stroke="#aab0ac" stroke-width="2" stroke-dasharray="2 3"/></svg>

          <svg x="2386" y="1406" width="71" height="36" viewBox="0 0 71 36" preserveAspectRatio="none"><path fill="#28693f" d="M0 0h71v12H0z"/><path fill="#90903a" d="M0 12h71v12H0z"/><path fill="#7e3338" d="M0 24h71v12H0z"/><circle cx="35.500" cy="18" r="12" fill="#275693"/><use href="#star" transform="translate(35.500 18) scale(.85)" fill="none" stroke="#a09a37" stroke-width="2"/></svg>
          <svg x="2528" y="1399" width="71" height="35" viewBox="0 0 71 36" preserveAspectRatio="none"><path fill="#88343f" d="M0 0h24v36H0z"/><path fill="#90883a" d="M24 0h47v18H24z"/><path fill="#237c4c" d="M24 18h47v18H24z"/><use href="#star" transform="translate(12 18) scale(.55)" fill="#222d2c"/></svg>
          <svg x="2670" y="1399" width="71" height="35" viewBox="0 0 71 36" preserveAspectRatio="none"><path fill="#862d34" d="M0 0h71v9H0z"/><path fill="#222d2c" d="M0 9h71v18H0z"/><path fill="#306f49" d="M0 27h71v9H0z"/><path d="M37 14A5 5 0 1 0 37 22A5 5 0 0 1 37 14Z" fill="#aab0ac"/><circle cx="41" cy="18" r="1.800" fill="#aab0ac"/></svg>
          <svg x="2812" y="1389" width="71" height="37" viewBox="0 0 72 36" preserveAspectRatio="none"><path fill="#226c54" d="M0 0h72v36H0z"/><path fill="#93a29e" d="M24 0h24v36H24z"/></svg>
          <svg x="2954" y="1388" width="71" height="36" viewBox="0 0 71 36" preserveAspectRatio="none"><path fill="#25496c" d="M0 36V0H24z"/><path fill="#a09152" d="M0 36L24 0H47z"/><path fill="#914439" d="M0 36L47 0H71V12z"/><path fill="#93a29e" d="M0 36L71 12V24z"/><path fill="#226a45" d="M0 36L71 24V36z"/></svg>
          <svg x="3096" y="1388" width="71" height="36" viewBox="0 0 71 36" preserveAspectRatio="none"><path fill="#7e3141" d="M0 0h71v12H0z"/><path fill="#93a29e" d="M0 12h71v12H0z"/><path fill="#222d2c" d="M0 24h71v12H0z"/><path fill="#235a37" d="M0 0L23 18 0 36z"/></svg>
        </g>
        <g class="lettering-flags">
          <text x="2523" y="1137.500" textLength="216" lengthAdjust="spacingAndGlyphs">YOU</text>
          <text x="2779" y="1137.500" textLength="310" lengthAdjust="spacingAndGlyphs">DON’T</text>
          <text x="3129" y="1137.500" textLength="320" lengthAdjust="spacingAndGlyphs">KNOW</text>
          <text x="2564" y="1244" textLength="476" lengthAdjust="spacingAndGlyphs">AFRICAN</text>
          <text class="accent" x="3080" y="1244" textLength="332" lengthAdjust="spacingAndGlyphs">FLAGS</text>
        </g>
      </svg>
    </div>
    <p class="card-caption">
      <svg class="lettering lettering-caption" viewBox="2318 1473 1335 127">
        <text x="2594" y="1585" textLength="227" lengthAdjust="spacingAndGlyphs">IDENTIFY</text>
        <text x="2842" y="1585" textLength="93" lengthAdjust="spacingAndGlyphs">THE</text>
        <text x="2952" y="1585" textLength="238" lengthAdjust="spacingAndGlyphs">COUNTRY</text>
      </svg>
    </p>
  </article>
</main>
</body>
</html>
```
FILE: styles.css
```css
* { box-sizing: border-box; }

body {
  margin: 0;
  height: 1600px;
  overflow: hidden;
  background: linear-gradient(#425452 0, #425452 450px, #3f5452 700px, #3e5350 1250px, #425452 1600px);
  color: #fff;
  font-family: "DejaVu Serif", serif;
}

h1, h2, h3, p { margin: 0; }
svg { display: block; }

.masthead {
  height: 585px;
  padding-top: 200px;
}

.games {
  display: flex;
  gap: 127.5px;
  width: 4260px;
  height: 1015px;
  margin-left: -607px;
  overflow: hidden;
}

.card {
  flex: 0 0 1335px;
  border-radius: 16px 16px 0 0;
  background: #606869;
}

.card-title { height: 252px; }

.screen {
  width: 1272px;
  height: 636px;
  margin: 0 auto;
}
.screen-map { height: 638px; }
.screen-flags { background: #425452; }
.screen-quiz {
  display: flex;
  flex-direction: column;
  align-items: center;
  padding-top: 113px;
  background: #3e5350;
}

.lettering { width: 100%; height: auto; overflow: visible; }
.art { width: 100%; height: auto; overflow: hidden; }

/* The thick outline turns the book-weight serif into an even slab */
.lettering text,
.lettering-flags text {
  font-family: "DejaVu Serif", serif;
  font-weight: 400;
  letter-spacing: .03em;
  fill: #fff;
  stroke: #fff;
  stroke-linejoin: miter;
  stroke-miterlimit: 2;
}
.lettering-title text { font-size: 190px; stroke-width: 14.5px; }
.lettering-heading text { font-size: 68.5px; stroke-width: 5.2px; }
.lettering-caption text { font-size: 46px; stroke-width: 3.5px; }
.lettering-quiz text { font-size: 74px; stroke-width: 5.6px; }
.lettering-flags text { font-size: 97px; stroke-width: 7.4px; }

.lettering-title { filter: drop-shadow(0 3px 4px rgba(0, 0, 0, .7)) drop-shadow(0 12px 13px rgba(0, 0, 0, .7)); }
.lettering-quiz { filter: drop-shadow(0 2px 2px rgba(0, 0, 0, .8)) drop-shadow(0 3px 5px rgba(0, 0, 0, .4)); }
.lettering-flags { filter: drop-shadow(0 2px 3px rgba(0, 0, 0, .8)) drop-shadow(0 7px 7px rgba(0, 0, 0, .6)); }

.lettering text.accent,
.lettering-flags text.accent { fill: #ff9d00; stroke: #ff9d00; }
.lettering text.slanted { font-style: italic; }

.quiz-title { width: 100%; height: 236px; }

.answer {
  display: flex;
  align-items: center;
  width: 1037px;
  height: 95px;
  padding-left: 42px;
  margin-right: 6px;
  background: #fff;
  box-shadow: 0 2px 1px rgba(0, 0, 0, .45);
}
.caret { width: 2px; height: 38px; background: #777; }

.map-text text {
  font-family: "Open Sans", sans-serif;
  fill: #fff;
}
.social-text text {
  font-family: "Liberation Sans", sans-serif;
  font-size: 11.5px;
  font-weight: 700;
  fill: #fff;
}
.social-text .count { fill: #3a4250; }
```
